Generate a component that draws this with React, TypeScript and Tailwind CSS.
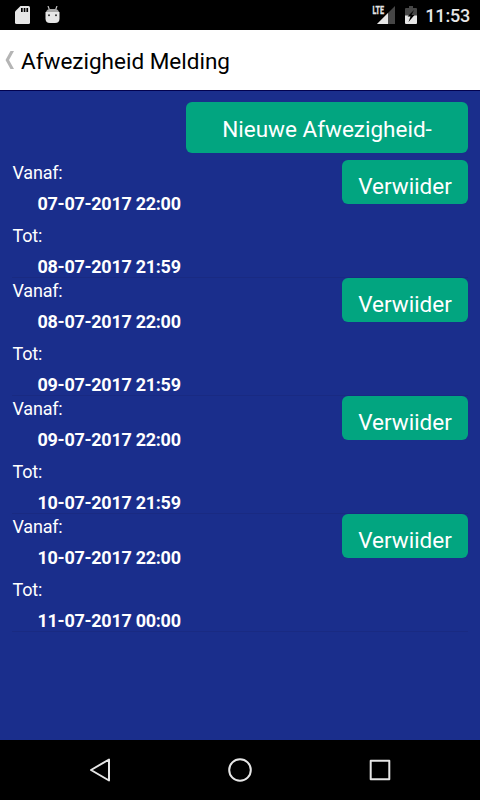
import React from "react";

const absences = [
  { from: "07-07-2017 22:00", to: "08-07-2017 21:59" },
  { from: "08-07-2017 22:00", to: "09-07-2017 21:59" },
  { from: "09-07-2017 22:00", to: "10-07-2017 21:59" },
  { from: "10-07-2017 22:00", to: "11-07-2017 00:00" },
];

function StatusBar() {
  return (
    <div className="flex h-[30px] items-center justify-between bg-black pl-[15px] pr-[10px]">
      <div className="flex items-center gap-[15px]">
        {/* SD card */}
        <svg width="15" height="18" viewBox="0 0 15 18">
          <path d="M5.500 0h8Q15 0 15 1.500v15q0 1.500-1.500 1.500h-12Q0 18 0 16.500V5.500z" fill="#e6e6e6" />
          <path d="M6 2h1.700v4H6zM8.700 2h1.700v4H8.700zM11.400 2h1.700v4h-1.700z" fill="#000" />
        </svg>
        {/* Debug head */}
        <svg width="15" height="18" viewBox="0 0 15 18">
          <path d="M3 0l1.500 4M12 0l-1.500 4" stroke="#c0c0c0" strokeWidth="1.200" />
          <path d="M1 6Q2 3 5 3h5q3 0 4 3z" fill="#a8a8a8" />
          <path d="M0.500 6h14v6.500q0 4.500-4.500 4.500H5Q0.500 17 0.500 12.500z" fill="#e6e6e6" />
          <circle cx="4" cy="9.200" r="1" fill="#333" />
          <circle cx="11" cy="9.200" r="1" fill="#333" />
        </svg>
      </div>
      <div className="flex items-center">
        <svg className="overflow-visible" width="24" height="20" viewBox="0 0 24 20">
          <path d="M23 1v18H5z" fill="#464646" />
          <path d="M16 8v11H5z" fill="#e6e6e6" />
          <path d="M0 0h12.500v10H0z" fill="#000" />
          <text
            x="0.500"
            y="9"
            fill="#e6e6e6"
            stroke="#e6e6e6"
            strokeWidth="0.300"
            fontSize="11"
            fontWeight="700"
            fontFamily="Roboto, sans-serif"
            textLength="11.500"
            lengthAdjust="spacingAndGlyphs"
          >
            LTE
          </text>
        </svg>
        <svg className="ml-[9px]" width="12" height="18" viewBox="0 0 12 18">
          <path d="M4 0h4v2h3q1 0 1 1v7H0V3q0-1 1-1h3z" fill="#464646" />
          <path d="M0 9.500h12v7.500q0 1-1 1H1q-1 0-1-1z" fill="#e6e6e6" />
          <path d="M9 4L2.500 10.500H5.500L3.500 16 9.500 9H6.500z" fill="#000" />
        </svg>
        <span className="ml-[8px] pt-[2px] text-[18px] font-medium leading-[28px] tracking-[-0.2px] text-[#e6e6e6]">
          11:53
        </span>
      </div>
    </div>
  );
}

function Header() {
  return (
    <header className="flex h-[60px] items-center bg-white pl-[5px]">
      <svg width="10" height="18" viewBox="0 0 10 18">
        <path d="M5.500 0H9L4 9 9 18H5.500L0.500 9z" fill="#b5b5b5" />
      </svg>
      <h1 className="ml-[6px] pt-px text-[22.5px] leading-[30px] text-black">
        Afwezigheid Melding
      </h1>
    </header>
  );
}

function AbsenceItem({ from, to }: { from: string; to: string }) {
  return (
    <li className="flex h-[118px] items-start justify-between border-b border-[#192a82] text-[18px] text-white">
      <div className="pl-[0.5px]">
        <div className="leading-[25px] tracking-[-0.2px]">Vanaf:</div>
        <div className="pl-[25px] font-bold leading-[37.5px] tracking-[-0.28px]">{from}</div>
        <div className="leading-[25px] tracking-[-0.2px]">Tot:</div>
        <div className="h-[29px] pl-[25px] font-bold leading-[37.5px] tracking-[-0.28px]">{to}</div>
      </div>
      <button className="h-11 w-[126px] rounded-md bg-[#02a580] pb-[10px] pt-[11px] text-center text-[22.5px]">
        {/* Label box is shorter than its line, so descenders are cut off */}
        <span className="block h-[23px] overflow-hidden leading-[30px]">
          Verwijder
        </span>
      </button>
    </li>
  );
}

function NavigationBar() {
  return (
    <nav className="flex h-[60px] items-center justify-center gap-[116px] bg-black">
      <svg width="24" height="24" viewBox="0 0 24 24" fill="none" stroke="#e6e6e6" strokeWidth="2" strokeLinejoin="round">
        <path d="M21 1.500v21L3 12z" />
      </svg>
      <svg width="24" height="24" viewBox="0 0 24 24" fill="none" stroke="#e6e6e6" strokeWidth="2">
        <circle cx="12" cy="12" r="10.800" />
      </svg>
      <svg width="24" height="24" viewBox="0 0 24 24" fill="none" stroke="#e6e6e6" strokeWidth="2" strokeLinejoin="round">
        <path d="M2.700 2.700h18.600v18.600H2.700z" />
      </svg>
    </nav>
  );
}

export default function App() {
  return (
    <div className="flex h-[800px] w-[480px] flex-col overflow-hidden bg-[#1a2e8c] font-['Roboto',sans-serif]">
      <StatusBar />
      <Header />
      <main className="flex-1 border-t border-[#02024f] px-3 pt-[11px]">
        <div className="flex justify-end">
          <button className="h-[51px] w-[282px] rounded-md bg-[#02a580] pt-0.5 text-[22.5px] leading-[30px] text-white">
            Nieuwe Afwezigheid-
          </button>
        </div>
        <ul className="mt-[7px]">
          {absences.map((absence) => (
            <AbsenceItem key={absence.from} from={absence.from} to={absence.to} />
          ))}
        </ul>
      </main>
      <NavigationBar />
    </div>
  );
}
